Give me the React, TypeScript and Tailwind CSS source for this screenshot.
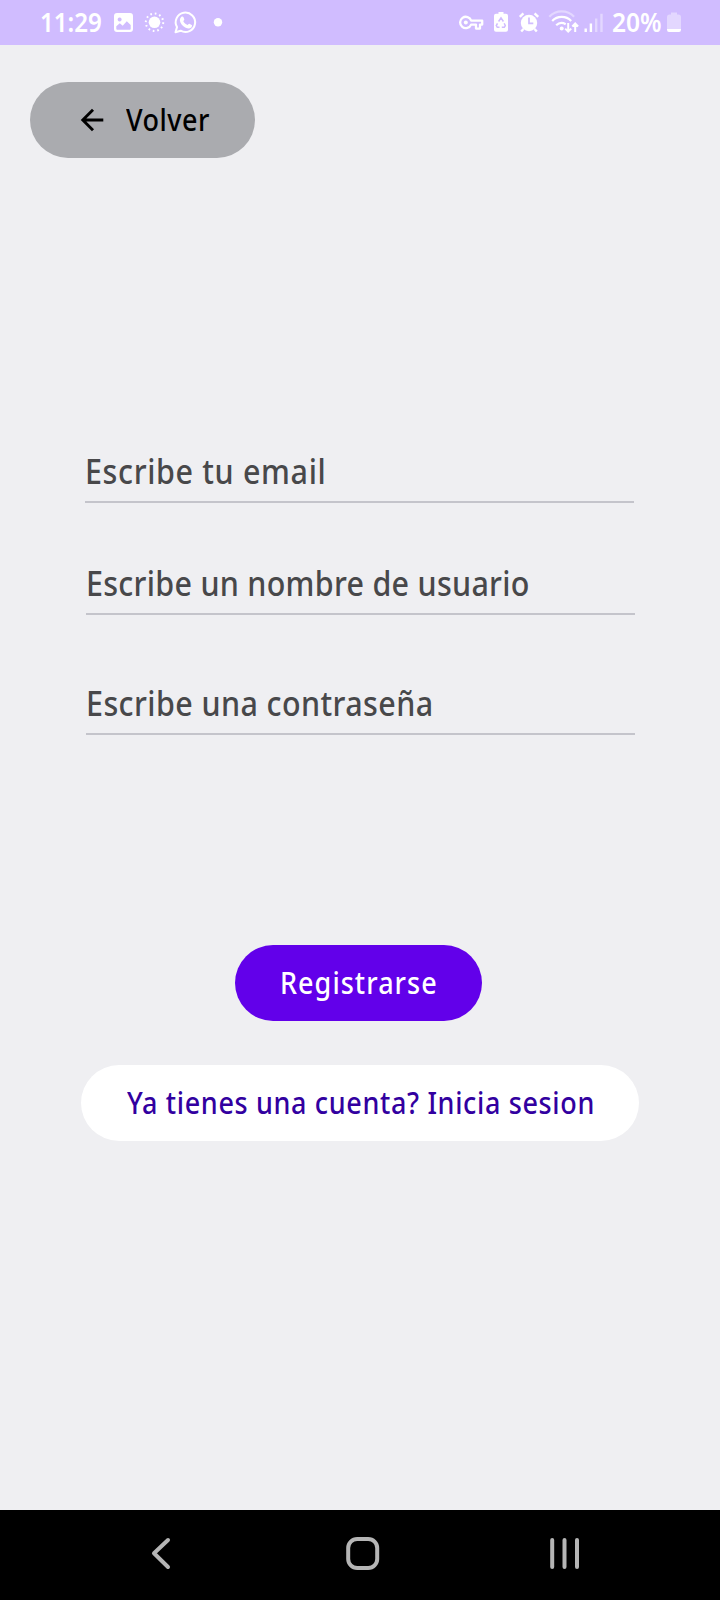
import React from "react";

function StatusBar() {
  return (
    <header className="flex h-[45px] shrink-0 items-start bg-[#d0bcff] text-white">
      <div className="flex h-11 w-[63px] ml-[40px] items-center">
        <span className="origin-left scale-x-[0.91] text-[26.5px] leading-[44px] font-semibold whitespace-nowrap">11:29</span>
      </div>
      <svg className="h-11 w-[120px] shrink-0" viewBox="103 0 120 44" fill="currentColor">
        <path fillRule="evenodd" d="M117 13h13q3 0 3 3v13q0 3-3 3h-13q-3 0-3-3V16q0-3 3-3Zm-.7 13.3v2.400q0 1 1 1h12.400q1 0 1-1v-3.700l-3.900-3.800-4.100 4.600-2.900-2.500Zm3.300-8.900a2 2 0 1 0 .1 0Z" />
        <circle cx="154.500" cy="22.300" r="5.800" />
        <circle cx="154.500" cy="22.300" r="8.700" fill="none" stroke="currentColor" strokeWidth="2" strokeDasharray="1.700 2.855" />
        <path d="M175.500 32.200l1.500-5.100a9.700 9.700 0 1 1 3.600 3.600Z" fill="none" stroke="currentColor" strokeWidth="2" strokeLinejoin="round" />
        <path d="M181.200 16.900c1-.8 1.900-.5 2.300.4l.8 2c.2.600-.8 1.500-1 2 .9 1.800 2.300 3 4.200 3.800.6-.4 1.300-1.700 1.900-1.400l2.300 1.200c.8.500.1 2.200-.8 2.900-1.400 1-3.400.8-5.700-.4-3.200-1.700-5.100-4.500-5.300-6.900-.1-1.500.5-2.900 1.300-3.600Z" />
        <circle cx="218" cy="22.300" r="4.200" />
      </svg>
      <div className="flex-1" />
      <svg className="h-11 w-[150px] shrink-0" viewBox="456 0 150 44" fill="currentColor">
        <path fill="none" stroke="currentColor" strokeWidth="2.300" strokeLinejoin="round" d="M471.200 20.600h11v4h-2.200v4h-4v-4h-4.900a5.700 5.700 0 1 1 .1-4Z" />
        <circle cx="465.800" cy="22.500" r="2" />
        <path d="M498.500 12h5v1.800h2.500q2 0 2 2v14q0 2-2 2h-10q-2 0-2-2v-14q0-2 2-2h2.500Z" />
        <g fill="none" stroke="#d0bcff" strokeWidth="1.500">
          <path d="M498.600 21.500l2.400-3.700 2.400 3.700M504.200 23.300l1.100 2.300-1 1.700h-2.500M499.500 27.300h-2.200l-1-1.700 1.200-2.300" />
        </g>
        <circle cx="529" cy="23" r="8.200" />
        <path d="M519.800 16.900l3.600-3.500M538.200 16.900l-3.600-3.500M523.500 29l-2.300 2.500M534.500 29l2.300 2.500" stroke="currentColor" strokeWidth="2.400" />
        <path d="M529 17.500v5.800h4.300" fill="none" stroke="#d0bcff" strokeWidth="1.700" />
        <g fill="none" stroke="currentColor" strokeWidth="2.200">
          <path d="M549.300 16.700a17 17 0 0 1 24.800 0" opacity=".4" />
          <path d="M552.200 21a13 13 0 0 1 19 0" />
          <path d="M556.200 25.200a8 8 0 0 1 9.500-1" />
          <path d="M568.200 23v8.500M565.200 28.600l3 3 3-3M575.200 32v-8.500M572.300 26.500l2.900-3 2.900 3" strokeWidth="2" />
        </g>
        <circle cx="561.700" cy="28.500" r="2" />
        <path d="M584.500 28.500h2.400v3.500h-2.400ZM589.700 23.500h2.400V32h-2.400Z" />
        <path d="M595 18.500h2.400V32H595ZM600.300 13.800h2.400V32h-2.400Z" opacity=".4" />
      </svg>
      <div className="ml-[6px] flex h-11 w-[52px] items-center">
        <span className="origin-left scale-x-[0.91] text-[27px] leading-[44px] font-semibold whitespace-nowrap">20%</span>
      </div>
      <svg className="mr-[36px] h-11 w-5 shrink-0" viewBox="664 0 20 44" fill="currentColor">
        <path d="M671 12.500h6v2h1.500q2.500 0 2.500 2.500V29h-14V17q0-2.500 2.500-2.500h1.500Z" opacity=".4" />
        <path d="M667 29h14v.8q0 2.200-2 2.200h-10q-2 0-2-2.200Z" />
      </svg>
    </header>
  );
}

function NavBar() {
  return (
    <nav className="h-[90px] shrink-0 bg-black">
      <svg className="h-[90px] w-full" viewBox="0 1510 720 90" fill="none" stroke="#b5b5b5" strokeWidth="4" strokeLinecap="round" strokeLinejoin="round">
        <path d="M168 1540L154 1553.300L168 1567" />
        <rect x="348.200" y="1539" width="29" height="29" rx="9" />
        <path d="M552.200 1540v27M564.500 1540v27M577 1540v27" />
      </svg>
    </nav>
  );
}

export default function App() {
  return (
    <div className="flex h-[1600px] w-[720px] flex-col overflow-hidden bg-[#efeff2] font-['Noto_Sans',sans-serif]">
      <StatusBar />
      <main className="flex flex-1 flex-col items-start">
        <button className="mt-[37px] ml-[30px] flex h-[76px] w-[225px] items-center rounded-full bg-[#aaabaf] pb-[2px] pl-[50px] text-black">
          <svg className="mt-[2px] h-6 w-6 shrink-0" viewBox="0 0 24 24" fill="none" stroke="currentColor" strokeWidth="2.900">
            <path d="M23.300 12H3M13 1.800L2.800 12L13 22.200" />
          </svg>
          <span className="ml-[22px] origin-left scale-x-[0.87] text-[31px] leading-10 font-medium tracking-[0.6px] whitespace-nowrap">Volver</span>
        </button>
        <form className="flex flex-col items-start text-[35px] leading-[44px] font-medium text-[#48484a]">
          <div className="mt-[291px] ml-[85px] h-[54px] w-[549px] border-b-2 border-[#c4c4cb]">
            <span className="inline-block origin-left scale-x-[0.87] tracking-[0.75px] whitespace-nowrap">Escribe tu email</span>
          </div>
          <div className="mt-[58px] ml-[86px] h-[54px] w-[549px] border-b-2 border-[#c4c4cb]">
            <span className="inline-block origin-left scale-x-[0.87] tracking-[0.33px] whitespace-nowrap">Escribe un nombre de usuario</span>
          </div>
          <div className="mt-[66px] ml-[86px] h-[54px] w-[549px] border-b-2 border-[#c4c4cb]">
            <span className="inline-block origin-left scale-x-[0.87] tracking-[0.48px] whitespace-nowrap">Escribe una contraseña</span>
          </div>
        </form>
        <button className="mt-[210px] ml-[235px] flex h-[76px] w-[247px] items-center rounded-full bg-[#6200ea] pb-[2px] pl-[45px] text-white">
          <span className="origin-left scale-x-[0.87] text-[31px] leading-10 font-medium tracking-[1.2px] whitespace-nowrap">Registrarse</span>
        </button>
        <button className="mt-[44px] ml-[81px] flex h-[76px] w-[558px] items-center rounded-full bg-white pb-[2px] pl-[46px] text-[#3200a0]">
          <span className="origin-left scale-x-[0.87] text-[31px] leading-10 font-medium tracking-[0.75px] whitespace-nowrap">Ya tienes una cuenta? Inicia sesion</span>
        </button>
      </main>
      <NavBar />
    </div>
  );
}
